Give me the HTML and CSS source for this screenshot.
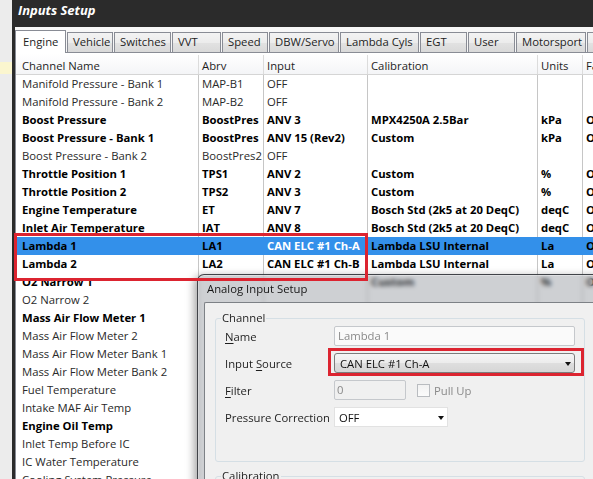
FILE: index.html
```html
<!DOCTYPE html>
<html>
<head>
<meta charset="utf-8">
<title>Inputs Setup</title>
<link rel="stylesheet" href="styles.css">
</head>
<body>
<div class="screen">
  <div class="desk"><div class="note"></div></div>
  <div class="win">
    <div class="titlebar"><span class="title">Inputs Setup</span></div>
    <div class="client">
      <div class="tabs">
        <div class="tab sel">Engine</div>
        <div class="tab">Vehicle</div>
        <div class="tab">Switches</div>
        <div class="tab">VVT</div>
        <div class="tab">Speed</div>
        <div class="tab">DBW/Servo</div>
        <div class="tab">Lambda Cyls</div>
        <div class="tab">EGT</div>
        <div class="tab">User</div>
        <div class="tab">Motorsport</div>
        <div class="tab"></div>
      </div>
      <div class="panel">
        <div class="row head"><span>Channel Name</span><span>Abrv</span><span>Input</span><span>Calibration</span><span>Units</span><span>Fa</span></div>
        <div class="row"><span>Manifold Pressure - Bank 1</span><span>MAP-B1</span><span>OFF</span><span></span><span></span><span></span></div>
        <div class="row"><span>Manifold Pressure - Bank 2</span><span>MAP-B2</span><span>OFF</span><span></span><span></span><span></span></div>
        <div class="row b"><span>Boost Pressure</span><span>BoostPres</span><span>ANV 3</span><span>MPX4250A 2.5Bar</span><span>kPa</span><span>O</span></div>
        <div class="row b"><span>Boost Pressure - Bank 1</span><span>BoostPres</span><span>ANV 15 (Rev2)</span><span>Custom</span><span>kPa</span><span>O</span></div>
        <div class="row"><span>Boost Pressure - Bank 2</span><span>BoostPres2</span><span>OFF</span><span></span><span></span><span></span></div>
        <div class="row b"><span>Throttle Position 1</span><span>TPS1</span><span>ANV 2</span><span>Custom</span><span>%</span><span>O</span></div>
        <div class="row b"><span>Throttle Position 2</span><span>TPS2</span><span>ANV 3</span><span>Custom</span><span>%</span><span>O</span></div>
        <div class="row b"><span>Engine Temperature</span><span>ET</span><span>ANV 7</span><span>Bosch Std (2k5 at 20 DeqC)</span><span>deqC</span><span>O</span></div>
        <div class="row b"><span>Inlet Air Temperature</span><span>IAT</span><span>ANV 8</span><span>Bosch Std (2k5 at 20 DeqC)</span><span>deqC</span><span>O</span></div>
        <div class="row b selrow"><span>Lambda 1</span><span>LA1</span><span class="hl">CAN ELC #1 Ch-A</span><span>Lambda LSU Internal</span><span>La</span><span>O</span></div>
        <div class="row b"><span>Lambda 2</span><span>LA2</span><span>CAN ELC #1 Ch-B</span><span>Lambda LSU Internal</span><span>La</span><span>O</span></div>
        <div class="row b"><span>O2 Narrow 1</span><span></span><span></span><span>Custom</span><span>%</span><span>O</span></div>
        <div class="row"><span>O2 Narrow 2</span><span></span><span></span><span></span><span></span><span></span></div>
        <div class="row b"><span>Mass Air Flow Meter 1</span><span></span><span></span><span></span><span></span><span></span></div>
        <div class="row"><span>Mass Air Flow Meter 2</span><span></span><span></span><span></span><span></span><span></span></div>
        <div class="row"><span>Mass Air Flow Meter Bank 1</span><span></span><span></span><span></span><span></span><span></span></div>
        <div class="row"><span>Mass Air Flow Meter Bank 2</span><span></span><span></span><span></span><span></span><span></span></div>
        <div class="row"><span>Fuel Temperature</span><span></span><span></span><span></span><span></span><span></span></div>
        <div class="row"><span>Intake MAF Air Temp</span><span></span><span></span><span></span><span></span><span></span></div>
        <div class="row b"><span>Engine Oil Temp</span><span></span><span></span><span></span><span></span><span></span></div>
        <div class="row"><span>Inlet Temp Before IC</span><span></span><span></span><span></span><span></span><span></span></div>
        <div class="row"><span>IC Water Temperature</span><span></span><span></span><span></span><span></span><span></span></div>
        <div class="row"><span>Cooling System Pressure</span><span></span><span></span><span></span><span></span><span></span></div>
      </div>
    </div>
  </div>

  <div class="dialog">
    <div class="dlg-title">Analog Input Setup</div>
    <div class="dlg-client">
      <fieldset class="group">
        <legend>Channel</legend>
        <div class="form">
          <span class="lbl"><u>N</u>ame</span>
          <div class="edit wide">Lambda 1</div>
          <span class="lbl">Input <u>S</u>ource</span>
          <div class="combo btn wide"><span>CAN ELC #1 Ch-A</span><i class="arrow"></i></div>
          <span class="lbl"><u>F</u>ilter</span>
          <div class="filter-line">
            <div class="edit small">0</div>
            <span class="check"></span>
            <span class="distext">Pull Up</span>
          </div>
          <span class="lbl">Pressure Correction</span>
          <div class="combo plain"><span>OFF</span><i class="arrow"></i></div>
        </div>
      </fieldset>
      <fieldset class="group group2">
        <legend>Calibration</legend>
        <div class="form"></div>
      </fieldset>
    </div>
  </div>

  <div class="mark mark-rows"></div>
  <div class="mark mark-src"></div>
</div>
</body>
</html>
```

FILE: styles.css
```css
* { box-sizing: border-box; }
html, body { margin: 0; padding: 0; }
body {
  width: 593px;
  height: 479px;
  overflow: hidden;
  background: #ececec;
  font-family: "Open Sans", "Noto Sans", sans-serif;
  font-size: 11.3px;
  color: #1e1e1e;
}
.screen {
  position: relative;
  width: 593px;
  height: 479px;
  overflow: hidden;
  display: flex;
}
.desk {
  width: 12px;
  flex: none;
  padding-top: 62px;
  background: #ececec;
}
.note { height: 12px; background: #fbf6cf; }

.win {
  flex: 1;
  min-width: 0;
  display: flex;
  flex-direction: column;
  background: #2b2b2b;
  padding-left: 3px;
}
.titlebar {
  height: 27px;
  flex: none;
  padding-left: 3px;
  line-height: 21px;
  white-space: nowrap;
}
.title {
  color: #fff;
  font-weight: 700;
  font-style: italic;
  font-size: 13px;
}
.client {
  flex: 1;
  min-height: 0;
  display: flex;
  flex-direction: column;
  background: #f7f7f7;
}

/* tabs */
.tabs {
  height: 26px;
  flex: none;
  display: flex;
  align-items: flex-start;
  padding-top: 3px;
  border-bottom: 1px solid #898c95;
}
.tab {
  flex: none;
  height: 20px;
  margin-top: 2px;
  margin-right: 1px;
  padding: 0 5px;
  border: 1px solid #898c95;
  border-bottom: 0;
  background: linear-gradient(#f3f3f3, #ececec 50%, #e2e2e2 51%, #d9d9d9);
  line-height: 18px;
  white-space: nowrap;
  overflow: hidden;
  color: #1e1e1e;
}
.tab.sel {
  height: 23px;
  margin-top: 0;
  padding: 1px 7px 0;
  line-height: 20px;
  background: #fff;
  position: relative;
  z-index: 1;
}
.tab:nth-child(1) { width: 51px; }
.tab:nth-child(2) { width: 46px; }
.tab:nth-child(3) { width: 57px; }
.tab:nth-child(4) { width: 49px; }
.tab:nth-child(5) { width: 46px; }
.tab:nth-child(6) { width: 70px; }
.tab:nth-child(7) { width: 79px; }
.tab:nth-child(8) { width: 47px; }
.tab:nth-child(9) { width: 47px; }
.tab:nth-child(10) { width: 70px; }
.tab:nth-child(11) { width: 20px; }

/* list */
.panel {
  flex: 1;
  min-height: 0;
  overflow: hidden;
  border-left: 1px solid #898c95;
  background: #fff;
  padding-top: 1px;
}
.row {
  display: grid;
  grid-template-columns: 183px 65px 104px 170px 45px 80px;
  height: 18px;
  line-height: 18px;
  white-space: nowrap;
  color: #2a2a2a;
}
.row > span {
  border-right: 1px solid #c6c6c6;
  padding-left: 3px;
  overflow: hidden;
}
.row > span:first-child { padding-left: 6px; }
.row.head {
  height: 21px;
  line-height: 19px;
  padding-top: 1px;
  border-bottom: 1px solid #d5d5d5;
  background: linear-gradient(#ffffff, #f4f5f7);
  color: #1e1e1e;
}
.row.head > span { border-right-color: #dcdcdc; padding-top: 1px; }
.row.b { font-weight: 700; color: #000; }
.row.selrow { background: #3390ea; }
.row.selrow > span { border-right-color: transparent; }
.row.selrow .hl { color: #fff; }

/* dialog */
.dialog {
  position: absolute;
  left: 197px;
  top: 274px;
  width: 420px;
  height: 230px;
  z-index: 5;
  border: 1px solid rgba(40, 44, 48, 0.85);
  border-radius: 7px 7px 0 0;
  padding-left: 6px;
  background: rgba(120, 126, 132, 0.36);
  -webkit-backdrop-filter: blur(2px);
  backdrop-filter: blur(2px);
  box-shadow: -3px 2px 9px rgba(0, 0, 0, 0.35), inset 0 0 0 1px rgba(255, 255, 255, 0.35);
}
.dlg-title {
  height: 27px;
  line-height: 27px;
  padding-left: 3px;
  color: #151515;
  white-space: nowrap;
}
.dlg-client {
  height: 200px;
  background: #f0f0f0;
  border-top: 1px solid #7d8186;
  border-left: 1px solid #7d8186;
  border-radius: 2px 0 0 0;
  padding-top: 7px;
  padding-left: 10px;
}
.group {
  width: 370px;
  margin: 0;
  padding: 0;
  border: 1px solid #d5dfe5;
  border-radius: 3px;
  min-width: 0;
}
.group legend {
  margin-left: 5px;
  padding: 0 1px;
  line-height: 16px;
  color: #1e1e1e;
}
.group2 { margin-top: 6px; }
.form {
  display: grid;
  grid-template-columns: 109px 1fr;
  grid-auto-rows: 20px;
  row-gap: 7px;
  align-items: center;
  padding: 0 8px 34px 9px;
}
.group2 .form { padding-bottom: 20px; }
.lbl { white-space: nowrap; color: #1e1e1e; }
.lbl u { text-decoration-thickness: 1px; text-underline-offset: 2px; }
.edit {
  height: 20px;
  border: 1px solid #c5c8cc;
  border-radius: 2px;
  background: #fafafa;
  color: #8a8a8a;
  padding-left: 3px;
  line-height: 18px;
}
.wide { width: 241px; }
.edit.small { width: 72px; background: #f0f0f0; padding-left: 2px; }
.filter-line { display: flex; align-items: center; height: 20px; }
.check {
  width: 13px;
  height: 13px;
  margin-left: 11px;
  border: 1px solid #b9bcc0;
  background: linear-gradient(#f2f2f2, #fbfbfb);
}
.distext { margin-left: 4px; color: #8a8a8a; }
.combo {
  height: 20px;
  display: flex;
  align-items: center;
  justify-content: space-between;
  padding: 0 3px 0 4px;
  white-space: nowrap;
  color: #111;
}
.combo.btn {
  border: 1px solid #7c7c7c;
  border-radius: 3px;
  background: linear-gradient(#f5f5f5, #ececec 48%, #dedede 52%, #d6d6d6);
  padding-left: 5px;
}
.combo.plain {
  width: 114px;
  border: 1px solid #e2e2e2;
  background: #fff;
}
.arrow {
  width: 0;
  height: 0;
  border-left: 3.5px solid transparent;
  border-right: 3.5px solid transparent;
  border-top: 4px solid #111;
  margin-top: 1px;
}

/* annotation boxes */
.mark {
  position: absolute;
  border: 3px solid #dc2430;
  z-index: 10;
}
.mark-rows { left: 14px; top: 233px; width: 354px; height: 48px; }
.mark-src { left: 328px; top: 348px; width: 256px; height: 28px; }
```
